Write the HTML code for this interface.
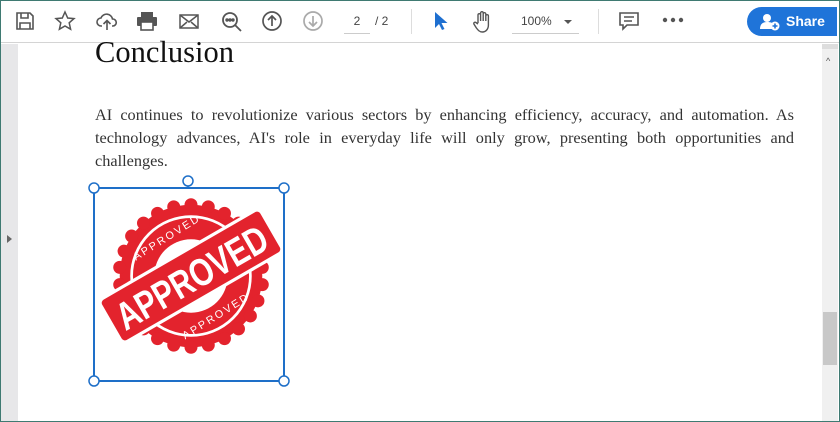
<!DOCTYPE html>
<html><head><style>
*{margin:0;padding:0;box-sizing:border-box}
body{width:840px;height:422px;overflow:hidden;background:#fff;font-family:"Liberation Sans",sans-serif;position:relative}
.frame{position:absolute;inset:0;border:1px solid #3f7a72;pointer-events:none;z-index:9}
.tb{position:absolute;left:0;top:0;width:840px;height:43px;background:#fff;border-bottom:1px solid #d4d4d4}
.ic{position:absolute;top:10px}
.left{position:absolute;left:1px;top:44px;width:17px;height:377px;background:#e7e7e9}
.sb{position:absolute;left:822px;top:44px;width:16px;height:377px;background:#f0f0f0}
.doc{position:absolute;font-family:"Liberation Serif",serif;color:#333}
</style></head><body>
<div class="tb">
<svg class="ic" style="left:14px" width="22" height="22" viewBox="0 0 22 22" fill="none" stroke="#555" stroke-width="1.6"><path d="M3 3h13l3 3v13H3z"/><path d="M7 3v5h7V3M6 19v-6h10v6"/></svg>
<svg class="ic" style="left:54px" width="22" height="22" viewBox="0 0 22 22" fill="none" stroke="#555" stroke-width="1.5"><path d="M11 2l2.7 6 6.3.6-4.8 4.2 1.4 6.4L11 16l-5.6 3.2 1.4-6.4L2 8.6 8.3 8z"/></svg>
<svg class="ic" style="left:95px" width="24" height="22" viewBox="0 0 24 22" fill="none" stroke="#555" stroke-width="1.6"><path d="M7 16H6a4 4 0 010-8 6 6 0 0111.5 1A3.5 3.5 0 0118 16h-1"/><path d="M12 20v-9M8.5 14l3.5-3.5 3.5 3.5"/></svg>
<svg class="ic" style="left:136px" width="22" height="22" viewBox="0 0 22 22"><rect x="5" y="2" width="12" height="5" fill="#555"/><rect x="1" y="7" width="20" height="9" rx="1" fill="#555"/><rect x="5" y="12" width="12" height="8" fill="#fff" stroke="#555" stroke-width="1.6"/></svg>
<svg class="ic" style="left:178px" width="22" height="22" viewBox="0 0 22 22" fill="none" stroke="#555" stroke-width="1.5"><rect x="2" y="5" width="18" height="13"/><path d="M2 5l9 7 9-7M2 18l7-6M20 18l-7-6"/></svg>
<svg class="ic" style="left:220px" width="24" height="24" viewBox="0 0 24 24" fill="none" stroke="#555" stroke-width="1.8"><circle cx="10" cy="10" r="7"/><path d="M15 15l6 6"/><circle cx="7" cy="10" r=".8" fill="#555"/><circle cx="10" cy="10" r=".8" fill="#555"/><circle cx="13" cy="10" r=".8" fill="#555"/></svg>
<svg class="ic" style="left:261px" width="22" height="22" viewBox="0 0 22 22" fill="none" stroke="#555" stroke-width="1.7"><circle cx="11" cy="11" r="9"/><path d="M11 16V6M7 10l4-4 4 4"/></svg>
<svg class="ic" style="left:302px" width="22" height="22" viewBox="0 0 22 22" fill="none" stroke="#aaa" stroke-width="1.7"><circle cx="11" cy="11" r="9"/><path d="M11 6v10M7 12l4 4 4-4"/></svg>
<div style="position:absolute;left:344px;top:12px;width:26px;height:22px;border-bottom:1px solid #ccc;font-size:12px;color:#444;text-align:center;line-height:18px">2</div>
<div style="position:absolute;left:375px;top:12px;font-size:12px;color:#444;line-height:18px">/ 2</div>
<div style="position:absolute;left:411px;top:9px;width:1px;height:25px;background:#ddd"></div>
<svg class="ic" style="left:432px" width="18" height="22" viewBox="0 0 18 22"><path d="M3 2v16l4-4 3 6 2.5-1-3-6h6z" fill="#1e6fd0"/></svg>
<svg class="ic" style="left:471px" width="24" height="24" viewBox="0 0 24 24" fill="none" stroke="#555" stroke-width="1.4"><path d="M7 13V5a1.3 1.3 0 012.6 0v6V3a1.3 1.3 0 012.6 0v8V4a1.3 1.3 0 012.6 0v7V6a1.3 1.3 0 012.6 0v9c0 4-2.5 7-6 7-3 0-4.5-2-6-4l-2.5-4a1.3 1.3 0 012-1.5L7 14"/></svg>
<div style="position:absolute;left:512px;top:12px;width:67px;height:22px;border-bottom:1px solid #ccc;font-size:12px;color:#444;line-height:18px;padding-left:9px">100%</div>
<div style="position:absolute;left:564px;top:20px;border:4px solid transparent;border-top:4px solid #555;border-bottom:0"></div>
<div style="position:absolute;left:598px;top:9px;width:1px;height:25px;background:#ddd"></div>
<svg class="ic" style="left:618px" width="22" height="22" viewBox="0 0 22 22" fill="none" stroke="#555" stroke-width="1.6"><path d="M2 3h18v12H9l-4 4v-4H2z"/><path d="M6 7h10M6 11h8"/></svg>
<svg class="ic" style="left:662px;top:17px" width="22" height="6" viewBox="0 0 22 6" fill="#555"><circle cx="3" cy="3" r="2.2"/><circle cx="11" cy="3" r="2.2"/><circle cx="19" cy="3" r="2.2"/></svg>
<div style="position:absolute;left:747px;top:7px;width:90px;height:29px;border-radius:15px 0 0 15px;background:#1f74d9;color:#fff;font-weight:bold;font-size:14px;line-height:29px;padding-left:39px">Share</div>
<svg style="position:absolute;left:760px;top:13px" width="20" height="18" viewBox="0 0 20 18" fill="#fff"><circle cx="7" cy="5" r="4"/><path d="M0 16c0-5 3-7 7-7s6 1 7 3v4z"/><circle cx="15" cy="13" r="4.5" fill="#fff"/><path d="M15 10.5v5M12.5 13h5" stroke="#1f74d9" stroke-width="1.6"/></svg>
</div>
<div class="left"><div style="position:absolute;left:6px;top:191px;border:4px solid transparent;border-left:5px solid #666;border-right:0"></div></div>
<div class="sb"><div style="position:absolute;left:1px;top:268px;width:14px;height:53px;background:#c8c8c8"></div>
<div style="position:absolute;left:4px;top:12px;font-size:9px;color:#555">^</div></div>
<div style="position:absolute;left:822px;top:44px;width:16px;height:5px;background:#ddd"></div>
<div class="doc" style="left:95px;top:33px;font-size:30.5px;color:#111;line-height:38px">Conclusion</div>
<div class="doc" style="left:95px;top:103px;width:699px;font-size:16.3px;line-height:23px;text-align:justify">AI continues to revolutionize various sectors by enhancing efficiency, accuracy, and automation. As technology advances, AI's role in everyday life will only grow, presenting both opportunities and challenges.</div>
<svg style="position:absolute;left:80px;top:175px" width="220" height="215" viewBox="0 0 220 215">
<g transform="translate(111,101) scale(1.08)">
<circle r="66" fill="#e3232d"/>
<g fill="#e3232d">
<circle cx="0" cy="-66" r="6"/><circle cx="16" cy="-64" r="6"/><circle cx="31" cy="-58" r="6"/><circle cx="44" cy="-49" r="6"/><circle cx="55" cy="-37" r="6"/><circle cx="62" cy="-23" r="6"/><circle cx="66" cy="-8" r="6"/><circle cx="66" cy="8" r="6"/><circle cx="62" cy="23" r="6"/><circle cx="55" cy="37" r="6"/><circle cx="44" cy="49" r="6"/><circle cx="31" cy="58" r="6"/><circle cx="16" cy="64" r="6"/><circle cx="0" cy="66" r="6"/><circle cx="-16" cy="64" r="6"/><circle cx="-31" cy="58" r="6"/><circle cx="-44" cy="49" r="6"/><circle cx="-55" cy="37" r="6"/><circle cx="-62" cy="23" r="6"/><circle cx="-66" cy="8" r="6"/><circle cx="-66" cy="-8" r="6"/><circle cx="-62" cy="-23" r="6"/><circle cx="-55" cy="-37" r="6"/><circle cx="-44" cy="-49" r="6"/><circle cx="-31" cy="-58" r="6"/><circle cx="-16" cy="-64" r="6"/>
</g>
<circle r="55" fill="none" stroke="#fff" stroke-width="2.5"/>
<circle r="34" fill="#fff"/>
<text font-family="Liberation Sans" font-size="10" fill="#fff" letter-spacing="2" transform="rotate(-32) translate(0,-39)" text-anchor="middle">APPROVED</text>
<text font-family="Liberation Sans" font-size="10" fill="#fff" letter-spacing="2" transform="rotate(-32) translate(0,47)" text-anchor="middle">APPROVED</text>
<g transform="rotate(-30)"><rect x="-86" y="-23" width="172" height="46" rx="5" fill="#e3232d" stroke="#fff" stroke-width="3"/>
<text y="14" font-family="Liberation Sans" font-weight="bold" font-size="36" fill="#fff" text-anchor="middle" textLength="156" lengthAdjust="spacingAndGlyphs">APPROVED</text></g>
</g>
<rect x="14" y="13" width="190" height="193" fill="none" stroke="#1e6fc8" stroke-width="2"/>
<line x1="108" y1="6" x2="108" y2="13" stroke="#1e6fc8" stroke-width="1.5"/>
<g fill="#fff" stroke="#1e6fc8" stroke-width="1.5"><circle cx="14" cy="13" r="5"/><circle cx="204" cy="13" r="5"/><circle cx="14" cy="206" r="5"/><circle cx="204" cy="206" r="5"/><circle cx="108" cy="6" r="5"/></g>
</svg>
<div class="frame"></div>
</body></html>
